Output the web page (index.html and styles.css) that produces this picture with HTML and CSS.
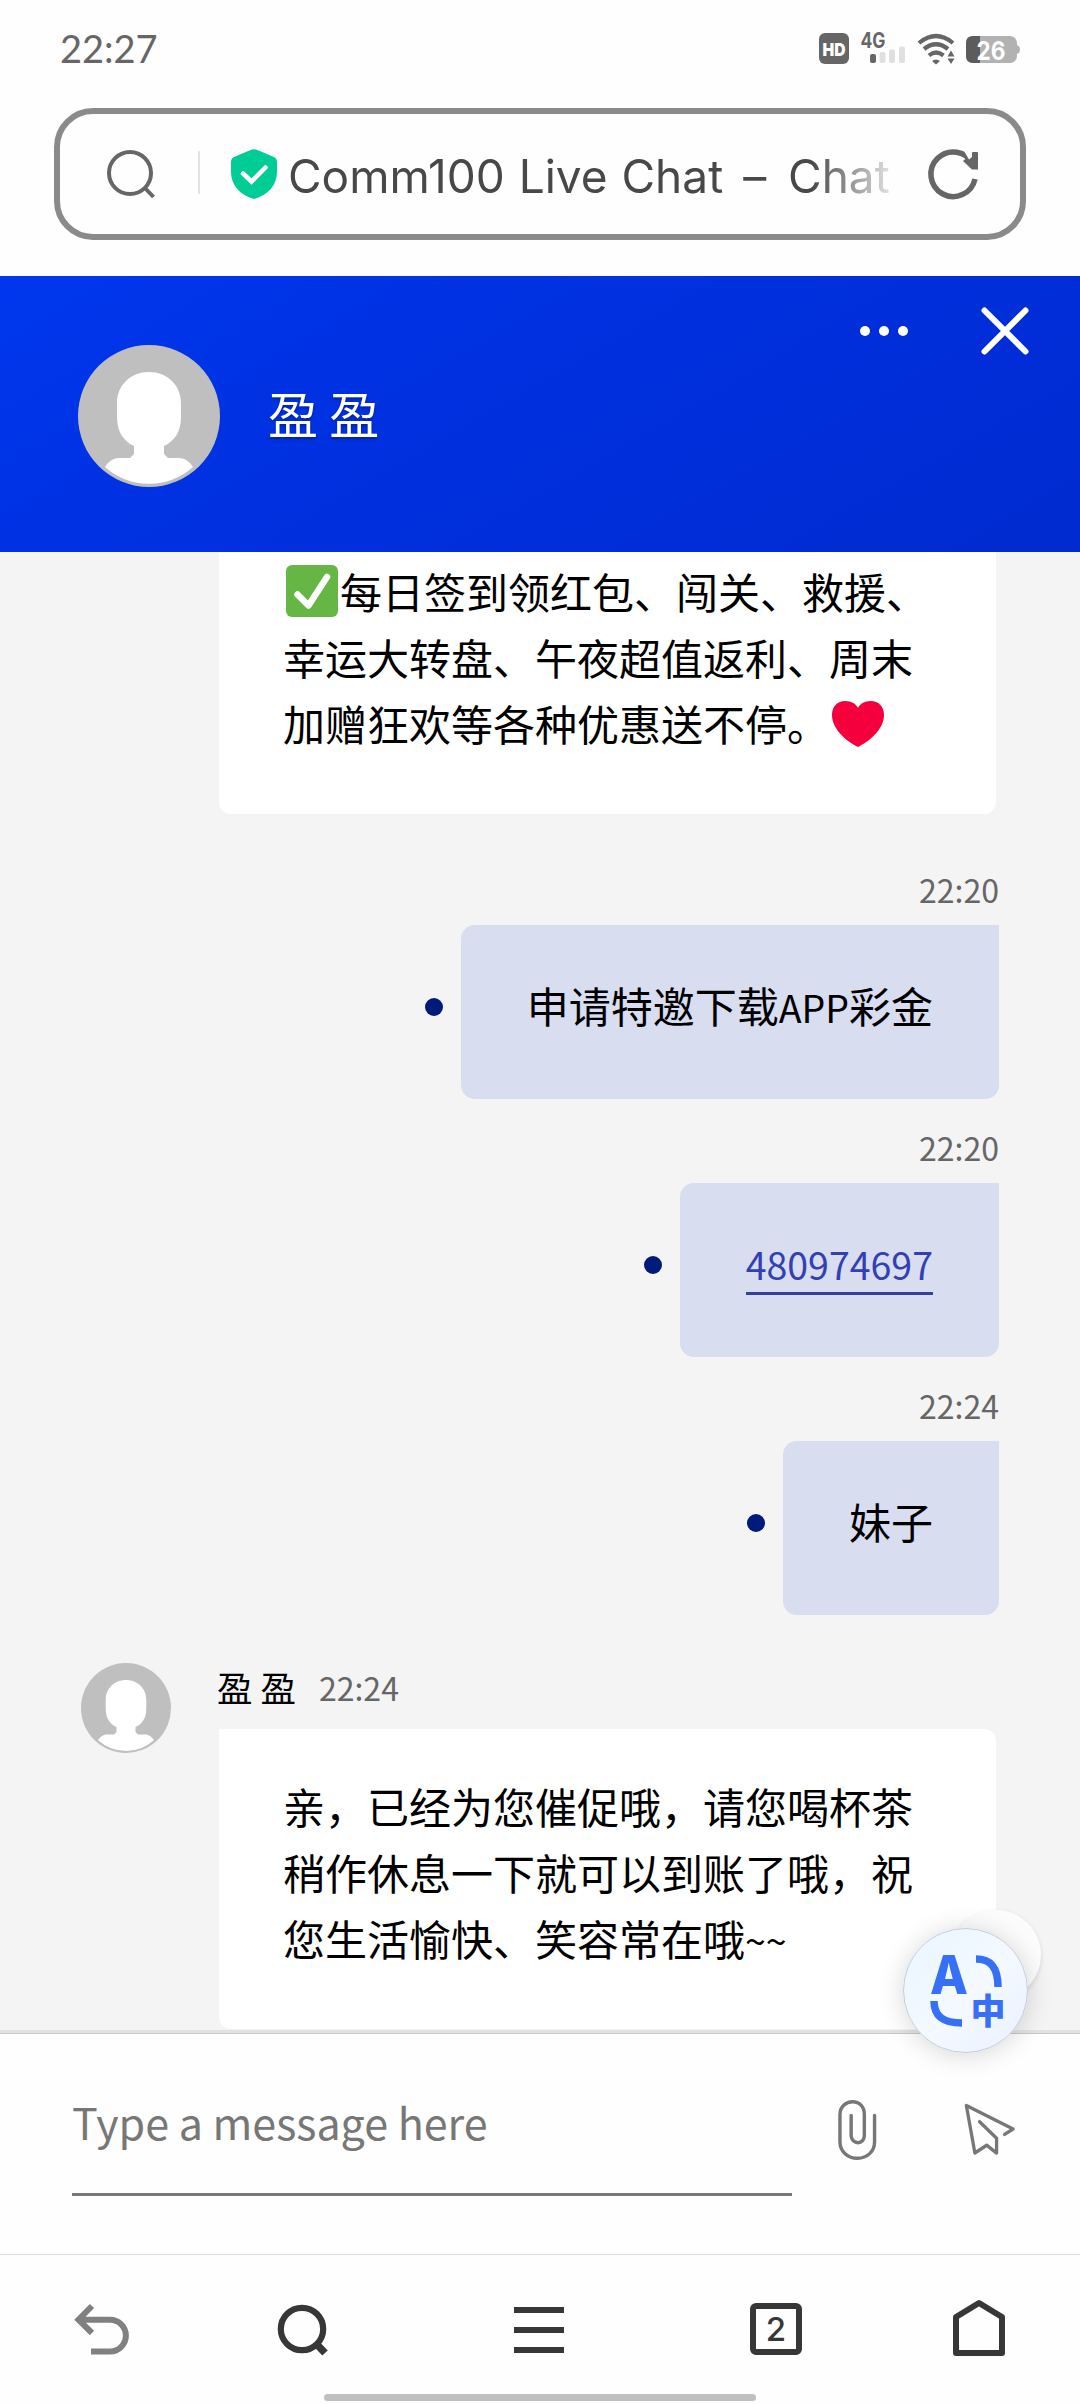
FILE: index.html
```html
<!DOCTYPE html>
<html lang="zh-CN">
<head>
<meta charset="utf-8">
<title>Comm100 Live Chat</title>
<link rel="stylesheet" href="styles.css">
</head>
<body>
<svg width="0" height="0" class="defs">
  <symbol id="person" viewBox="0 0 142 142">
    <circle cx="71" cy="71" r="71" fill="#bfbfbf"/>
    <path d="M71 27C89 27 103 40 103 58V72C103 86 97 96 86 101V109L90 113H101C107 113 112 117 115 122A66 66 0 0 1 27 122C30 117 35 113 41 113H52L56 109V101C45 96 39 86 39 72V58C39 40 53 27 71 27Z" fill="#fff"/>
  </symbol>
</svg>
<div class="screen">
  <header class="status">
    <span class="clock">22:27</span>
    <svg class="indicators" width="204" height="34" viewBox="818 31 204 34">
      <rect x="819" y="33" width="30" height="31" rx="6" fill="#666"/>
      <text x="834" y="55.500" text-anchor="middle" class="hd" textLength="23" lengthAdjust="spacingAndGlyphs">HD</text>
      <text x="860.500" y="48" class="net" textLength="25" lengthAdjust="spacingAndGlyphs">4G</text>
      <rect x="870" y="54" width="6" height="9" rx="2" fill="#666"/>
      <rect x="879.500" y="52" width="6" height="11" rx="2" fill="#e0e0e0"/>
      <rect x="889" y="49.500" width="6" height="13.500" rx="2" fill="#e0e0e0"/>
      <rect x="899" y="46.500" width="6" height="16.500" rx="2" fill="#e0e0e0"/>
      <g fill="none" stroke="#666" stroke-width="4.200">
        <path d="M919 43Q936 29 953 43"/>
        <path d="M924 49Q936 39.500 948 49"/>
        <path d="M929 55.500Q936 49.500 943.500 55.500"/>
      </g>
      <path d="M932 61Q936 58 940 61L936 64.500ZM947.500 56.500L951 50.500L954.500 56.500ZM947.500 58.500L951 64L954.500 58.500Z" fill="#666"/>
      <rect x="966" y="36" width="51" height="27" rx="7" fill="#b2b2b2"/>
      <path d="M1017 45Q1020 46 1020 49.500T1017 54Z" fill="#b2b2b2"/>
      <path d="M973 36H980V63H973Q966 63 966 56V43Q966 36 973 36Z" fill="#5c5c5c"/>
      <text x="991" y="59.500" text-anchor="middle" class="level" textLength="29" lengthAdjust="spacingAndGlyphs">26</text>
    </svg>
  </header>

  <div class="address">
    <svg width="52" height="52" viewBox="0 0 52 52" fill="none" stroke="#666" stroke-width="4">
      <circle cx="23" cy="26" r="21"/><path d="M38 41L46.500 50"/>
    </svg>
    <span class="rule"></span>
    <svg class="shield" width="46" height="50" viewBox="0 0 46 50">
      <path d="M19 1.300Q23 -.7 27 1.300L43 8Q46 9.500 46 13V23C46 36 37 46 23 50C9 46 0 36 0 23V13Q0 9.500 3 8Z" fill="#00cc96"/>
      <path d="M12 24.500L20.500 32.500L34.500 18.500" fill="none" stroke="#fff" stroke-width="4.500" stroke-linecap="round"/>
    </svg>
    <span class="title">Comm100 Live Chat <span class="dash">–</span> Chat</span>
    <svg width="52" height="52" viewBox="0 0 52 52">
      <path d="M45 17A22.300 22.300 0 1 0 47 32" fill="none" stroke="#666" stroke-width="5.500"/>
      <path d="M44 6Q44 5 45 5H49Q50 5 50 6V22.500H44L35 14Z" fill="#666"/>
      <path d="M36 4H44V10L41 12.500Z" fill="#fefefe"/>
    </svg>
  </div>

  <div class="agent-bar">
    <svg class="portrait" width="142" height="142"><use href="#person"/></svg>
    <h1>盈 盈</h1>
    <div class="controls">
      <svg width="48" height="10" viewBox="0 0 48 10" fill="#fff"><circle cx="5" cy="5" r="5"/><circle cx="24" cy="5" r="5"/><circle cx="43" cy="5" r="5"/></svg>
      <svg width="50" height="50" viewBox="0 0 50 50" stroke="#fff" stroke-width="6" stroke-linecap="round"><path d="M4.500 4.500L45.500 45.500M45.500 4.500L4.500 45.500"/></svg>
    </div>
  </div>

  <main class="chat">
    <div class="reply first">
      <svg class="emoji" width="52" height="52" viewBox="0 0 52 52"><rect width="52" height="52" rx="6" fill="#65b645"/><path d="M11.500 29.500L22.500 40.500L41 12" fill="none" stroke="#fff" stroke-width="6.500" stroke-linecap="round" stroke-linejoin="round"/></svg>每日签到领红包、闯关、救援、<br>幸运大转盘、午夜超值返利、周末<br>加赠狂欢等各种优惠送不停。<svg class="heart" width="52" height="46" viewBox="0 0 52 46"><path d="M26 46C16 41 0 29 0 14C0 5 6 0 13 0C20 0 24 3 26 7C28 3 32 0 39 0C46 0 52 5 52 14C52 29 36 41 26 46Z" fill="#f5003d"/></svg>
    </div>

    <section class="sent"><time>22:20</time><div class="line"><i></i><p>申请特邀下载<span class="en">APP</span>彩金</p></div></section>
    <section class="sent"><time>22:20</time><div class="line"><i></i><p><a>480974697</a></p></div></section>
    <section class="sent"><time>22:24</time><div class="line"><i></i><p>妹子</p></div></section>

    <section class="received">
      <svg width="90" height="90"><use href="#person"/></svg>
      <div>
        <div class="meta"><b>盈 盈</b><time>22:24</time></div>
        <div class="reply last">亲，已经为您催促哦，请您喝杯茶<br>稍作休息一下就可以到账了哦，祝<br>您生活愉快、笑容常在哦<span class="en">~~</span></div>
      </div>
    </section>
    <span class="bump"></span>
  </main>

  <div class="composer">
    <div class="field">Type a message here</div>
    <svg class="clip" width="39" height="62" viewBox="0 0 40 62" fill="none" stroke="#777" stroke-width="3.500" stroke-linecap="round">
      <path d="M37.500 16V43C37.500 53 30 60 20 60S2 53 2 43V15C2 7 8 2 15 2S27 7 27 15V37C27 41 24 44 20.500 44S13.500 41 13.500 37V16"/>
    </svg>
    <svg class="send" width="51" height="53" viewBox="0 0 54 54" preserveAspectRatio="none" fill="none" stroke="#777" stroke-width="3.500" stroke-linejoin="round" stroke-linecap="round">
      <path d="M43 32L52 26.500L2.500 2.500L11.500 51L24 43L34.500 51V36L16.500 19"/>
    </svg>
    <svg class="translate" width="125" height="125" viewBox="0 0 125 125">
      <defs><linearGradient id="ice" x1="0" y1="0" x2="1" y2="1"><stop offset="0" stop-color="#e9f6ff"/><stop offset=".55" stop-color="#f4f9ff"/><stop offset="1" stop-color="#e9f1ff"/></linearGradient></defs>
      <circle cx="62.500" cy="62.500" r="62" fill="url(#ice)" stroke="#c3ccda" stroke-width="1"/>
      <text x="46" y="65.500" text-anchor="middle" class="latin" textLength="38" lengthAdjust="spacingAndGlyphs">A</text>
      <text x="85" y="95.500" text-anchor="middle" class="han">中</text>
      <path d="M73 31C88 31 95 40 95 59M31 73C31 88 40 95 59 95" fill="none" stroke="#376ff7" stroke-width="7.500"/>
    </svg>
  </div>

  <nav class="toolbar">
    <svg width="54" height="60" viewBox="0 0 54 60" fill="none" stroke="#808080" stroke-width="6"><path d="M16 50.500H35A15.800 15.800 0 0 0 35 18.700H5M17 5L3.500 18.700L17 32"/></svg>
    <svg width="52" height="60" viewBox="0 0 52 60" fill="none" stroke="#373737"><circle cx="24" cy="28" r="21.200" stroke-width="6.200"/><path d="M38.500 43L47 52" stroke-width="7.500"/></svg>
    <svg width="50" height="60" viewBox="0 0 50 60" fill="#373737"><path d="M0 6H50V12H0ZM0 26H50V32H0ZM0 46H50V52H0Z"/></svg>
    <span class="tabs">2</span>
    <svg width="52" height="60" viewBox="0 0 52 60" fill="none" stroke="#373737" stroke-width="6" stroke-linejoin="round"><path d="M3 16L26 2L49 16V52H3Z"/></svg>
  </nav>
  <div class="home"></div>
</div>
</body>
</html>
```
FILE: styles.css
```css
* { box-sizing: border-box; }
body { margin: 0; background: #fefefe; font-family: "Noto Sans CJK SC", sans-serif; }
h1, p { margin: 0; font-weight: 400; }
svg { display: block; flex: none; overflow: visible; }
.defs { position: absolute; }
.screen { width: 1080px; height: 2404px; overflow: hidden; display: flex; flex-direction: column; }
.screen > * { flex: none; }

.status { height: 108px; padding: 31px 58px 0 60px; display: flex; justify-content: space-between; align-items: flex-start; }
.clock { font: 400 38px/34px Lato, sans-serif; color: #666; }
.hd { font: 900 18px Inter, sans-serif; fill: #fff; }
.net { font: 700 21px Inter, sans-serif; fill: #666; }
.level { font: 700 26px Inter, sans-serif; fill: #fff; }

.address { height: 132px; margin: 0 54px; padding: 0 40px 3px 47px; border: 6px solid #8a8a8a; border-radius: 39px; display: flex; align-items: center; }
.rule { width: 2px; height: 43px; margin: 0 31px 0 39px; background: #e3e3e3; }
.shield { margin-top: 2px; }
.title { flex: 1; margin: 6px 17px 0 11px; font: 400 46px/60px Inter, sans-serif; color: #484848; white-space: nowrap; word-spacing: 1px; overflow: hidden; -webkit-mask-image: linear-gradient(90deg, #000 84%, transparent 99%); mask-image: linear-gradient(90deg, #000 84%, transparent 99%); }
.dash { margin: 0 8px 0 6px; }

.agent-bar { height: 276px; margin-top: 36px; padding: 0 50px 0 78px; display: flex; align-items: center; background: linear-gradient(150deg, #0037ee, #002fdd 50%, #002bd0); }
.agent-bar h1 { margin: 0 0 4px 48px; font-size: 50px; line-height: 60px; color: #fff; text-shadow: 0 2px 3px rgba(0,0,0,.3); }
.portrait { margin-top: 3px; }
.controls { margin: 30px 0 0 auto; align-self: flex-start; display: flex; align-items: center; gap: 72px; }

.chat { height: 1478px; position: relative; overflow: hidden; background: #f4f4f4; color: #000; }
.reply { width: 777px; background: #fff; border-radius: 0 12px 12px 12px; padding: 0 64px; font-size: 42px; line-height: 66px; white-space: nowrap; }
.first { height: 262px; margin-left: 219px; padding-top: 6px; border-radius: 0 0 12px 12px; }
.emoji, .heart { display: inline-block; margin: 0 2px 0 3px; vertical-align: -8px; }
.heart { margin: 0 0 0 3px; vertical-align: -6px; }
.en { font-size: 37.5px; line-height: 1; }
.sent { height: 258px; padding: 53px 81px 0 0; display: flex; flex-direction: column; align-items: flex-end; }
.sent time, .meta time { font-size: 32px; line-height: 44px; color: #666; }
.sent time { height: 44px; margin-bottom: 14px; }
.line { display: flex; align-items: center; gap: 18px; }
.line i { width: 18px; height: 18px; margin-bottom: 10px; border-radius: 50%; background: #001a7a; }
.line p { height: 174px; padding: 47px 66px 0; border-radius: 14px 0 14px 14px; background: #d8ddf0; font-size: 42px; line-height: 66px; }
.line a { display: block; height: 65px; color: #3340b4; font-size: 37.5px; line-height: 68px; border-bottom: 3px solid #3340a4; }
.received { padding: 75px 0 0 81px; display: flex; gap: 46px; }
.meta { height: 66px; padding-bottom: 18px; display: flex; align-items: center; gap: 23px; }
.meta b { font-size: 35.500px; line-height: 44px; font-weight: 400; }
.last { height: 300px; margin-left: 2px; padding-top: 44px; }
.bump { position: absolute; right: 39px; top: 1358px; width: 90px; height: 90px; border-radius: 50%; background: #fcfcfc; box-shadow: 0 2px 5px rgba(0,0,0,.12); }

.composer { position: relative; height: 224px; padding-left: 72px; display: flex; background: #fefefe; border-top: 3px solid #e2e2e2; box-shadow: inset 0 1px #c8c8c8; }
.field { width: 720px; height: 163px; padding-top: 58px; font-size: 43px; line-height: 60px; color: #777; border-bottom: 3px solid #777; }
.clip { margin: 66px 0 0 46px; }
.send { margin: 70px 0 0 87px; }
.translate { position: absolute; left: 903px; top: -105px; border-radius: 50%; box-shadow: 0 2px 26px rgba(0,0,0,.16); }
.latin { font: 800 53px Inter, sans-serif; fill: #376ff7; }
.han { font: 900 35px "Noto Sans CJK SC", sans-serif; fill: #376ff7; }

.toolbar { height: 140px; padding: 46px 0 0 75px; display: grid; grid-template-columns: 203px 236px 236px 203px 52px; justify-content: start; align-items: start; background: #fefefe; border-top: 1px solid #ddd; box-shadow: 0 -2px 5px rgba(0,0,0,.04); }
.tabs { width: 52px; height: 52px; margin-top: 2px; border: 6px solid #373737; border-radius: 6px; font: 500 33px/40px Inter, sans-serif; color: #373737; text-align: center; }
.home { width: 432px; height: 7px; margin: 0 auto; border-radius: 4px; background: #c0c0c0; }
```
